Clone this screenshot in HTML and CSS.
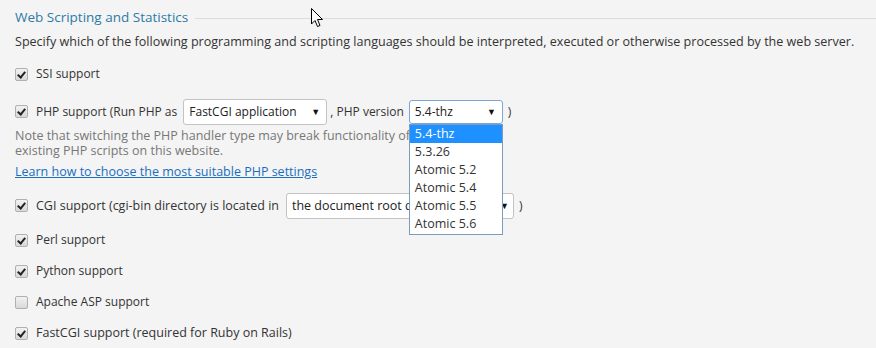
FILE: index.html
```html
<!DOCTYPE html>
<html>
<head>
<meta charset="utf-8">
<link rel="stylesheet" href="styles.css">
</head>
<body>
<div class="section">
  <div class="legend">
    <span class="legend-title">Web Scripting and Statistics</span>
    <span class="legend-line"></span>
  </div>
  <p class="desc">Specify which of the following programming and scripting languages should be interpreted, executed or otherwise processed by the web server.</p>

  <div class="row r-ssi">
    <span class="cb checked"></span>
    <span>SSI support</span>
  </div>

  <div class="row r-php">
    <span class="cb checked"></span>
    <span>PHP support (Run PHP as</span>
    <span class="select sel-handler"><span class="sel-text">FastCGI application</span><span class="arrow">▼</span></span>
    <span class="after-sel">, PHP version</span>
    <span class="sel-wrap">
      <span class="select sel-version"><span class="sel-text">5.4-thz</span><span class="arrow">▼</span></span>
      <ul class="options">
        <li class="opt active">5.4-thz</li>
        <li class="opt">5.3.26</li>
        <li class="opt">Atomic 5.2</li>
        <li class="opt">Atomic 5.4</li>
        <li class="opt">Atomic 5.5</li>
        <li class="opt">Atomic 5.6</li>
      </ul>
    </span>
    <span class="paren">)</span>
  </div>
  <p class="note">Note that switching the PHP handler type may break functionality of<br>existing PHP scripts on this website.</p>
  <a class="link" href="#">Learn how to choose the most suitable PHP settings</a>

  <div class="row r-cgi">
    <span class="cb checked"></span>
    <span class="wide">CGI support (cgi-bin directory is located in</span>
    <span class="select sel-cgi"><span class="sel-text wide">the document root directory</span><span class="arrow">▼</span></span>
    <span class="paren">)</span>
  </div>

  <div class="row r-std">
    <span class="cb checked"></span>
    <span>Perl support</span>
  </div>
  <div class="row r-std">
    <span class="cb checked"></span>
    <span>Python support</span>
  </div>
  <div class="row r-std">
    <span class="cb"></span>
    <span>Apache ASP support</span>
  </div>
  <div class="row r-std">
    <span class="cb checked"></span>
    <span class="wide">FastCGI support (required for Ruby on Rails)</span>
  </div>
</div>
<svg class="cursor" width="13" height="20" viewBox="0 0 13 20">
  <path d="M0.5 0.5 L0.5 16 L4 12.5 L6.5 18.5 L9 17.5 L6.5 11.5 L11.5 11.5 Z" fill="#fff" stroke="#000" stroke-width="1"/>
</svg>
</body>
</html>
```
FILE: styles.css
```css
html, body {
  margin: 0;
  padding: 0;
  background: #f4f4f4;
}
body {
  font-family: "Open Sans", "Noto Sans", sans-serif;
  font-size: 12px;
  color: #333;
  width: 876px;
  height: 348px;
  overflow: hidden;
  position: relative;
}
.wide {
  font-size: 12.5px;
}
.section {
  padding: 0 15px;
  display: flex;
  flex-direction: column;
  align-items: flex-start;
}
.legend {
  margin-top: 7px;
  height: 20px;
  display: flex;
  align-items: center;
  align-self: stretch;
  margin-right: -15px;
}
.legend-title {
  font-size: 13.5px;
  color: #2c7ba6;
  white-space: nowrap;
}
.legend-line {
  flex: 1;
  border-top: 1px solid #dcdcdc;
  margin-left: 7px;
  margin-top: 2px;
}
.desc {
  margin: 6px 0 0;
  line-height: 18px;
  white-space: nowrap;
  font-size: 12.55px;
}
.row {
  display: flex;
  align-items: center;
  line-height: 18px;
  white-space: nowrap;
}
.r-ssi { margin-top: 14px; height: 18px; }
.r-php { margin-top: 16px; height: 25px; }
.r-cgi { margin-top: 12px; height: 25px; }
.r-std { margin-top: 13px; height: 18px; }
.cb {
  width: 11px;
  height: 11px;
  border: 1px solid #b0b0b0;
  border-radius: 2px;
  background: linear-gradient(#f2f2f2, #d8d8d8);
  margin-right: 8px;
  flex: none;
  position: relative;
}
.cb.checked::after {
  content: "";
  position: absolute;
  left: 3px;
  top: 1px;
  width: 3px;
  height: 6px;
  border: solid #222;
  border-width: 0 2px 2px 0;
  transform: rotate(40deg);
}
.select {
  display: inline-flex;
  align-items: center;
  justify-content: space-between;
  height: 23px;
  border: 1px solid #c3c3c3;
  border-radius: 3px;
  background: #fff;
  padding: 0 6px 0 5px;
  box-sizing: border-box;
  color: #222;
  overflow: hidden;
}
.arrow {
  font-size: 9px;
  color: #111;
}
.sel-handler { width: 144px; height: 26px; margin-left: 6px; }
.after-sel { margin-left: 3px; }
.sel-wrap {
  position: relative;
  margin-left: 5px;
  display: inline-flex;
}
.sel-version {
  width: 94px;
  height: 24px;
  border-color: #7aa7d8;
}
.sel-cgi { width: 228px; height: 26px; margin-left: 7px; padding-right: 4px; }
.paren { margin-left: 5px; }
.options {
  position: absolute;
  left: 0;
  top: 24px;
  width: 94px;
  margin: 0;
  padding: 0 0 1px;
  list-style: none;
  background: #fff;
  border: 1px solid #7a9cbf;
  box-sizing: border-box;
  z-index: 2;
}
.opt {
  height: 18px;
  line-height: 18px;
  padding-left: 5px;
  color: #333;
  font-size: 12.5px;
}
.opt.active {
  background: #1e90ff;
  color: #fff;
}
.note {
  margin: 4px 0 0;
  line-height: 15px;
  color: #777;
  font-size: 12.5px;
}
.link {
  margin-top: 5px;
  line-height: 18px;
  color: #1a6ebd;
  text-decoration: underline;
  font-size: 12.5px;
}
.cursor {
  position: absolute;
  left: 311px;
  top: 8px;
}
```
